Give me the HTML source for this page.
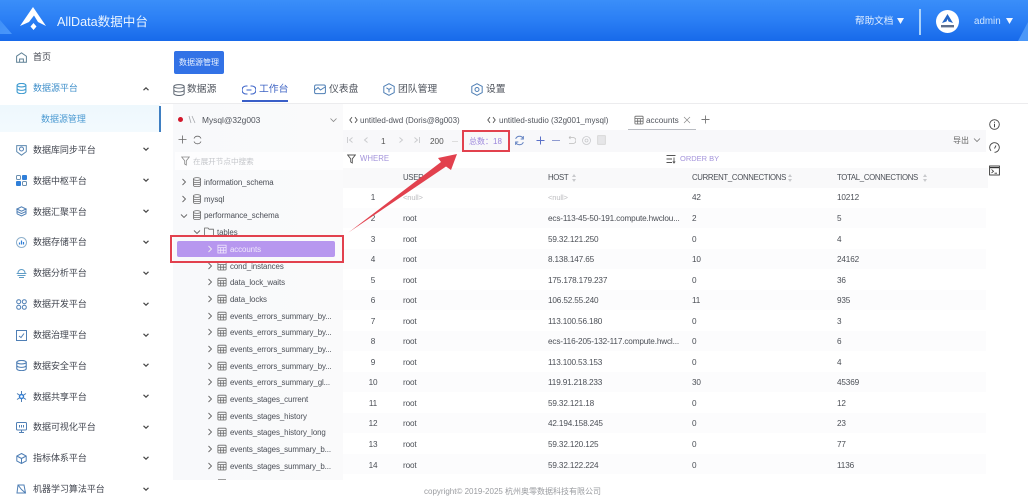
<!DOCTYPE html>
<html lang="zh"><head><meta charset="utf-8"><title>AllData</title>
<style>
html,body{margin:0;padding:0;background:#fff}
#p{position:relative;width:1028px;height:500px;overflow:hidden;background:#fff;font-family:"Liberation Sans","Noto Sans CJK SC",sans-serif;color:#555;filter:blur(.3px)}
#p div,#p svg{position:absolute}
.t{white-space:nowrap;line-height:12px;height:12px}
.s{font-size:9px;left:33px;color:#41454f;letter-spacing:-.03px}
.tr{font-size:7.9px;color:#4b4f57;letter-spacing:-.08px}
.c{font-size:8.2px;color:#4b4f56;letter-spacing:-.15px}
.h{font-size:7.8px;color:#4b4f56;letter-spacing:-.32px}
.ic{fill:none;stroke:#4f7fb5;stroke-width:1}
</style></head><body>
<div id="p">
<svg width="0" height="0">
<defs>
<symbol id="v" viewBox="0 0 8 8"><path d="M1.5 2.8L4 5.2L6.5 2.8" fill="none" stroke="#444" stroke-width="1.2"/></symbol>
<symbol id="r" viewBox="0 0 8 8"><path d="M2.5 1L5.5 4L2.5 7" fill="none" stroke="#666" stroke-width=".9"/></symbol>
<symbol id="d" viewBox="0 0 10 10"><g fill="none" stroke="#707070" stroke-width=".8"><ellipse cx="5" cy="2" rx="3.6" ry="1.4"/><path d="M1.4 2V8.2C1.4 9 3 9.600 5 9.600S8.600 9 8.600 8.200V2M1.4 4.200C1.4 5 3 5.600 5 5.600S8.600 5 8.600 4.200M1.4 6.200C1.4 7 3 7.600 5 7.600S8.600 7 8.600 6.200"/></g></symbol>
<symbol id="g" viewBox="0 0 10 10"><g fill="none" stroke="#666" stroke-width=".8"><rect x=".9" y="1.2" width="8.2" height="7.8" rx=".8"/><path d="M.9 3.6H9.1M.9 6.2H9.1M3.7 3.6V9M6.3 3.6V9"/></g></symbol>
<symbol id="cd" viewBox="0 0 9 8"><path d="M3 1.200L.8 4L3 6.800M6 1.200L8.200 4L6 6.800" fill="none" stroke="#555" stroke-width=".9"/></symbol>
</defs></svg>

<!-- header -->
<div style="left:0;top:0;width:1028px;height:41px;background:linear-gradient(180deg,#3a8ef9 0%,#2a7ef4 50%,#1769ea 100%)"></div>
<div style="left:0;top:20px;width:12px;height:14px;background:linear-gradient(135deg,#3f90f8,#4a97fa);clip-path:polygon(0 0,100% 100%,0 100%)"></div>
<svg style="left:19px;top:6px" width="28" height="26" viewBox="0 0 28 26"><path d="M14 1L27 20L19 16L15 9.500L10 16L1 20Z" fill="#fff"/><path d="M14.500 17L17.500 20.500L14.500 24L11.500 20.500Z" fill="#fff"/></svg>
<div class="t" style="left:57px;top:15px;font-size:12.6px;color:#eaf4ff;height:15px;line-height:15px">AllData数据中台</div>
<div class="t" style="left:855px;top:16px;font-size:9.6px;color:#e4f0ff">帮助文档</div>
<svg style="left:897px;top:18px" width="7" height="6" viewBox="0 0 7 6"><path d="M0 0H7L3.500 6Z" fill="#f2f7ff"/></svg>
<div style="left:919px;top:9px;width:2px;height:26px;background:#a9d2fb"></div>
<div style="left:936px;top:10px;width:23px;height:23px;border-radius:50%;background:#fff"></div>
<svg style="left:941px;top:14px" width="13" height="15" viewBox="0 0 13 15"><path d="M6.500 0L12 9L7.500 7.500L6.500 5L5.500 7.500L1 9Z" fill="#2466c8"/><rect x="0" y="11" width="13" height="2.400" fill="#2a3f66" opacity=".75"/></svg>
<div class="t" style="left:974px;top:16px;font-size:9.800px;color:#cfe5ff">admin</div>
<svg style="left:1006px;top:18px" width="7" height="6" viewBox="0 0 7 6"><path d="M0 0H7L3.500 6Z" fill="#f2f7ff"/></svg>
<div style="left:1018px;top:22px;width:10px;height:19px;background:#4a97f8;clip-path:polygon(100% 0,100% 100%,0 100%)"></div>

<!-- sidebar -->
<div style="left:0;top:105px;width:160px;height:27px;background:linear-gradient(180deg,#eef8fd,#f3fafe)"></div>
<div style="left:159px;top:106px;width:1.6px;height:26px;background:#3f7fc2"></div>

<svg style="left:16px;top:52px" class="ic" width="11" height="11" viewBox="0 0 11 11"><path d="M.6 4.200L5.500 .8L10.400 4.200V10.200H.6ZM3.600 10.200V7H7.400V10.200" stroke="#5f8196"/></svg>
<div class="t s" style="top:51px">首页</div>
<svg style="left:16px;top:83px" class="ic" width="11" height="11" viewBox="0 0 10 10"><ellipse cx="5" cy="2" rx="4" ry="1.600" stroke="#3f9bd0"/><path d="M1 2V8C1 9 3 9.700 5 9.700S9 9 9 8V2M1 5C1 6 3 6.700 5 6.700S9 6 9 5" stroke="#3f9bd0"/></svg>
<div class="t s" style="top:82px;color:#3f8fca">数据源平台</div>
<svg style="left:142px;top:85px;transform:rotate(180deg)" width="8" height="8"><use href="#v"/></svg>
<div class="t s" style="top:113px;left:41px;color:#4b9ad2">数据源管理</div>

<svg style="left:16px;top:144px" class="ic" width="11" height="12" viewBox="0 0 11 12"><path d="M.7 1.600H10.300V7.600L5.500 11.200L.7 7.600Z" stroke="#5f8ab0"/><circle cx="5.500" cy="5" r="2"/></svg>
<div class="t s" style="top:144px">数据库同步平台</div>
<svg style="left:142px;top:145px" width="8" height="8"><use href="#v"/></svg>

<svg style="left:16px;top:175px" width="11" height="11" viewBox="0 0 11 11"><rect x=".5" y=".5" width="4" height="4" rx="1" fill="none" stroke="#6a8fb0"/><rect x="6" y="0" width="5" height="5" rx="1" fill="#2f7fd9"/><rect x="0" y="6" width="5" height="5" rx="1" fill="#2f7fd9"/><rect x="6.500" y="6.500" width="4" height="4" rx="1" fill="none" stroke="#6a8fb0"/></svg>
<div class="t s" style="top:175px">数据中枢平台</div>
<svg style="left:142px;top:176px" width="8" height="8"><use href="#v"/></svg>

<svg style="left:16px;top:206px" class="ic" width="11" height="11" viewBox="0 0 11 11"><path d="M5.500 .8L10 3L5.500 5.200L1 3ZM1 5.400L5.500 7.600L10 5.400M1 7.800L5.500 10L10 7.800V3M1 7.800V3"/></svg>
<div class="t s" style="top:206px">数据汇聚平台</div>
<svg style="left:142px;top:207px" width="8" height="8"><use href="#v"/></svg>

<svg style="left:16px;top:237px" class="ic" width="11" height="11" viewBox="0 0 11 11"><circle cx="5.500" cy="5.500" r="5" stroke="#8fb0cc"/><path d="M3.500 7.500V5.500M5.500 7.500V3.500M7.500 7.500V5" stroke="#2f7fd9" stroke-width="1.200"/></svg>
<div class="t s" style="top:236px">数据存储平台</div>
<svg style="left:142px;top:238px" width="8" height="8"><use href="#v"/></svg>

<svg style="left:16px;top:268px" class="ic" width="11" height="11" viewBox="0 0 11 11"><path d="M2 5A3.500 3.500 0 0 1 9 5M.6 5.500H10.400M1.500 7.500H9.500M3 9.500H8" stroke="#5f9cc6"/></svg>
<div class="t s" style="top:267px">数据分析平台</div>
<svg style="left:142px;top:269px" width="8" height="8"><use href="#v"/></svg>

<svg style="left:16px;top:299px" class="ic" width="11" height="11" viewBox="0 0 11 11"><circle cx="2.700" cy="2.700" r="2"/><circle cx="8.300" cy="2.700" r="2"/><circle cx="2.700" cy="8.300" r="2"/><circle cx="8.300" cy="8.300" r="2"/></svg>
<div class="t s" style="top:298px">数据开发平台</div>
<svg style="left:142px;top:300px" width="8" height="8"><use href="#v"/></svg>

<svg style="left:16px;top:330px" class="ic" width="11" height="11" viewBox="0 0 11 11"><rect x=".5" y=".5" width="10" height="10"/><path d="M3 6L5 7.500L8 3.500"/></svg>
<div class="t s" style="top:329px">数据治理平台</div>
<svg style="left:142px;top:331px" width="8" height="8"><use href="#v"/></svg>

<svg style="left:16px;top:360px" class="ic" width="11" height="11" viewBox="0 0 10 10"><ellipse cx="5" cy="2" rx="4.300" ry="1.600"/><path d="M.7 2V8C.7 9 3 9.700 5 9.700S9.300 9 9.300 8V2M.7 5C.7 6 3 6.700 5 6.700S9.300 6 9.300 5"/></svg>
<div class="t s" style="top:360px">数据安全平台</div>
<svg style="left:142px;top:361px" width="8" height="8"><use href="#v"/></svg>

<svg style="left:16px;top:391px" class="ic" width="11" height="11" viewBox="0 0 11 11"><circle cx="5.500" cy="5.500" r="2" stroke="#2f7fd9" stroke-width="1.400"/><path d="M5.500 0V3M5.500 8V11M1 2.500L3.800 4.300M7.200 6.700L10 8.500M1 8.500L3.800 6.700M7.200 4.300L10 2.500"/></svg>
<div class="t s" style="top:391px">数据共享平台</div>
<svg style="left:142px;top:392px" width="8" height="8"><use href="#v"/></svg>

<svg style="left:16px;top:422px" class="ic" width="11" height="11" viewBox="0 0 11 11"><rect x=".5" y=".5" width="10" height="7.500" rx="1"/><path d="M5.500 8V10.500M3 10.500H8M3.500 5.500V3M5.500 5.500V3M7.500 5.500V3"/></svg>
<div class="t s" style="top:421px">数据可视化平台</div>
<svg style="left:142px;top:423px" width="8" height="8"><use href="#v"/></svg>

<svg style="left:16px;top:453px" class="ic" width="11" height="11" viewBox="0 0 11 11"><path d="M5.500 .5L10.200 3V8L5.500 10.500L.8 8V3ZM.8 3L5.500 5.500L10.200 3M5.500 5.500V10.500"/></svg>
<div class="t s" style="top:452px">指标体系平台</div>
<svg style="left:142px;top:454px" width="8" height="8"><use href="#v"/></svg>

<svg style="left:16px;top:484px" class="ic" width="11" height="11" viewBox="0 0 11 11"><path d="M2 1H8L9.500 9H1ZM2 1L5.500 5.500L9.500 9"/></svg>
<div class="t s" style="top:483px">机器学习算法平台</div>
<svg style="left:142px;top:485px" width="8" height="8"><use href="#v"/></svg>

<!-- top button + tabs -->
<div class="t" style="left:174px;top:51px;width:50px;height:23px;line-height:24px;background:#3272e6;border-radius:2px;color:#eaf2ff;font-size:8px;text-align:center">数据源管理</div>

<svg style="left:173px;top:84px" width="12" height="12" viewBox="0 0 10 10"><g fill="none" stroke="#5b6470" stroke-width=".8"><ellipse cx="5" cy="2" rx="4.300" ry="1.500"/><path d="M.7 2V8C.7 9 3 9.600 5 9.600S9.300 9 9.300 8V2M.7 5C.7 6 3 6.600 5 6.600S9.300 6 9.300 5"/></g></svg>
<div class="t" style="left:187px;top:84px;font-size:9.800px;color:#4d525b">数据源</div>
<svg style="left:242px;top:84px" width="14" height="12" viewBox="0 0 14 12"><path d="M5.500 2H4A4 4 0 0 0 4 10H5.500M8.500 2H10A4 4 0 0 1 10 10H8.500M4.500 6H9.500" fill="none" stroke="#3a62c8" stroke-width="1.100"/></svg>
<div class="t" style="left:259px;top:84px;font-size:9.800px;color:#3d63c4">工作台</div>
<div style="left:242px;top:100px;width:46px;height:2px;background:#3a5fc8"></div>
<svg style="left:314px;top:84px" width="12" height="11" viewBox="0 0 12 11"><rect x=".6" y="1" width="10.800" height="8.600" rx="1.400" fill="none" stroke="#4f7fb5"/><path d="M1 6L4 3.600L6.500 6L11 3" fill="none" stroke="#4f7fb5"/></svg>
<div class="t" style="left:329px;top:84px;font-size:9.800px;color:#4d525b">仪表盘</div>
<svg style="left:383px;top:83px" width="12" height="13" viewBox="0 0 12 13"><path d="M6 .7L11.200 3.400V9.600L6 12.300L.8 9.600V3.400Z" fill="none" stroke="#4f7fb5"/><path d="M3.400 4.800L6 6.400L8.600 4.800M6 6.400V9.400" fill="none" stroke="#4f7fb5"/></svg>
<div class="t" style="left:398px;top:84px;font-size:9.800px;color:#4d525b">团队管理</div>
<svg style="left:471px;top:83px" width="12" height="13" viewBox="0 0 12 13"><path d="M6 .7L11.200 3.400V9.600L6 12.300L.8 9.600V3.400Z" fill="none" stroke="#4f7fb5"/><circle cx="6" cy="6.500" r="2" fill="none" stroke="#4f7fb5"/></svg>
<div class="t" style="left:486px;top:84px;font-size:9.800px;color:#4d525b">设置</div>
<div style="left:160px;top:103px;width:868px;height:1px;background:#ececee"></div>

<!-- tree panel -->
<div style="left:173px;top:104px;width:170px;height:376px;background:linear-gradient(90deg,#f8f9fb,#fafafb)"></div>
<div style="left:175px;top:152px;width:168px;height:18px;background:#fdfdfe"></div>
<div style="left:178px;top:117px;width:5px;height:5px;border-radius:50%;background:#d3172b"></div>
<svg style="left:188px;top:115px" width="8" height="9" viewBox="0 0 8 9"><path d="M1 1L3 8M4 1L7 8" fill="none" stroke="#a5a8ad" stroke-width=".8"/></svg>
<div class="t" style="left:202px;top:114px;font-size:8.400px;color:#50545c">Mysql@32g003</div>
<svg style="left:329px;top:116px" width="9" height="8" viewBox="0 0 8 8"><path d="M1 2.500L4 5.500L7 2.500" fill="none" stroke="#888" stroke-width=".8"/></svg>
<svg style="left:178px;top:135px" width="9" height="9" viewBox="0 0 9 9"><path d="M4.500 .5V8.500M.5 4.500H8.500" stroke="#666" stroke-width=".8"/></svg>
<svg style="left:193px;top:135px" width="9" height="10" viewBox="0 0 9 10"><path d="M1 3.500A3.800 3.800 0 0 1 8 3.500M8 6.500A3.800 3.800 0 0 1 1 6.500" fill="none" stroke="#666" stroke-width=".8"/></svg>
<svg style="left:181px;top:156px" width="9" height="10" viewBox="0 0 9 10"><path d="M.7 1H8.300L5.300 4.800V9L3.700 8V4.800Z" fill="none" stroke="#888" stroke-width=".8"/></svg>
<div class="t" style="left:193px;top:156px;font-size:7.600px;color:#c3c5c9">在展开节点中搜索</div>

<svg style="left:180px;top:178px" width="8" height="8"><use href="#r"/></svg><svg style="left:192px;top:177px" width="10" height="10"><use href="#d"/></svg><div class="t tr" style="left:204px;top:177px">information_schema</div>
<svg style="left:180px;top:195px" width="8" height="8"><use href="#r"/></svg><svg style="left:192px;top:194px" width="10" height="10"><use href="#d"/></svg><div class="t tr" style="left:204px;top:194px">mysql</div>
<svg style="left:180px;top:212px;transform:rotate(90deg)" width="8" height="8"><use href="#r"/></svg><svg style="left:192px;top:210px" width="10" height="10"><use href="#d"/></svg><div class="t tr" style="left:204px;top:210px">performance_schema</div>
<svg style="left:193px;top:228px;transform:rotate(90deg)" width="8" height="8"><use href="#r"/></svg><svg style="left:204px;top:227px" width="10" height="9" viewBox="0 0 10 9"><path d="M.6 1H4L5 2.200H9.400V8.400H.6Z" fill="none" stroke="#666" stroke-width=".8"/></svg><div class="t tr" style="left:217px;top:227px">tables</div>

<div style="left:177px;top:241px;width:158px;height:16px;background:#b797ef;border-radius:2px"></div>
<svg style="left:206px;top:245px" width="8" height="8" viewBox="0 0 8 8"><path d="M2.500 1L5.500 4L2.500 7" fill="none" stroke="#eee" stroke-width=".9"/></svg>
<svg style="left:217px;top:244px" width="10" height="10" viewBox="0 0 10 10"><g fill="none" stroke="#f1e9fd" stroke-width=".8"><rect x=".9" y="1.200" width="8.200" height="7.800"/><path d="M.9 3.600H9.100M.9 6.200H9.100M3.700 3.600V9M6.300 3.600V9"/></g></svg>
<div class="t tr" style="left:230px;top:244px;color:#f0e9fc">accounts</div>

<svg style="left:206px;top:262px" width="8" height="8"><use href="#r"/></svg><svg style="left:217px;top:261px" width="10" height="10"><use href="#g"/></svg><div class="t tr" style="left:230px;top:261px">cond_instances</div>
<svg style="left:206px;top:278px" width="8" height="8"><use href="#r"/></svg><svg style="left:217px;top:277px" width="10" height="10"><use href="#g"/></svg><div class="t tr" style="left:230px;top:277px">data_lock_waits</div>
<svg style="left:206px;top:295px" width="8" height="8"><use href="#r"/></svg><svg style="left:217px;top:294px" width="10" height="10"><use href="#g"/></svg><div class="t tr" style="left:230px;top:294px">data_locks</div>
<svg style="left:206px;top:312px" width="8" height="8"><use href="#r"/></svg><svg style="left:217px;top:311px" width="10" height="10"><use href="#g"/></svg><div class="t tr" style="left:230px;top:311px">events_errors_summary_by...</div>
<svg style="left:206px;top:328px" width="8" height="8"><use href="#r"/></svg><svg style="left:217px;top:327px" width="10" height="10"><use href="#g"/></svg><div class="t tr" style="left:230px;top:327px">events_errors_summary_by...</div>
<svg style="left:206px;top:345px" width="8" height="8"><use href="#r"/></svg><svg style="left:217px;top:344px" width="10" height="10"><use href="#g"/></svg><div class="t tr" style="left:230px;top:344px">events_errors_summary_by...</div>
<svg style="left:206px;top:362px" width="8" height="8"><use href="#r"/></svg><svg style="left:217px;top:361px" width="10" height="10"><use href="#g"/></svg><div class="t tr" style="left:230px;top:361px">events_errors_summary_by...</div>
<svg style="left:206px;top:378px" width="8" height="8"><use href="#r"/></svg><svg style="left:217px;top:377px" width="10" height="10"><use href="#g"/></svg><div class="t tr" style="left:230px;top:377px">events_errors_summary_gl...</div>
<svg style="left:206px;top:395px" width="8" height="8"><use href="#r"/></svg><svg style="left:217px;top:394px" width="10" height="10"><use href="#g"/></svg><div class="t tr" style="left:230px;top:394px">events_stages_current</div>
<svg style="left:206px;top:412px" width="8" height="8"><use href="#r"/></svg><svg style="left:217px;top:411px" width="10" height="10"><use href="#g"/></svg><div class="t tr" style="left:230px;top:411px">events_stages_history</div>
<svg style="left:206px;top:428px" width="8" height="8"><use href="#r"/></svg><svg style="left:217px;top:427px" width="10" height="10"><use href="#g"/></svg><div class="t tr" style="left:230px;top:427px">events_stages_history_long</div>
<svg style="left:206px;top:445px" width="8" height="8"><use href="#r"/></svg><svg style="left:217px;top:444px" width="10" height="10"><use href="#g"/></svg><div class="t tr" style="left:230px;top:444px">events_stages_summary_b...</div>
<svg style="left:206px;top:462px" width="8" height="8"><use href="#r"/></svg><svg style="left:217px;top:461px" width="10" height="10"><use href="#g"/></svg><div class="t tr" style="left:230px;top:461px">events_stages_summary_b...</div>
<svg style="left:217px;top:478px" width="10" height="2" viewBox="0 0 10 2"><path d="M1 1.500H9" stroke="#888" stroke-width=".8"/></svg>

<!-- editor tabs -->
<svg style="left:349px;top:116px" width="9" height="8"><use href="#cd"/></svg>
<div class="t" style="left:360px;top:115px;font-size:8px;color:#50545c">untitled-dwd (Doris@8g003)</div>
<svg style="left:487px;top:116px" width="9" height="8"><use href="#cd"/></svg>
<div class="t" style="left:499px;top:115px;font-size:8px;color:#50545c">untitled-studio (32g001_mysql)</div>
<svg style="left:634px;top:115px" width="10" height="10"><use href="#g"/></svg>
<div class="t" style="left:646px;top:115px;font-size:8.200px;color:#50545c">accounts</div>
<svg style="left:683px;top:116px" width="8" height="8" viewBox="0 0 8 8"><path d="M1 1L7 7M7 1L1 7" stroke="#888" stroke-width=".7"/></svg>
<div style="left:628px;top:129px;width:68px;height:1px;background:#b9bcc2"></div>
<svg style="left:701px;top:115px" width="9" height="9" viewBox="0 0 9 9"><path d="M4.500 .5V8.500M.5 4.500H8.500" stroke="#777" stroke-width=".9"/></svg>

<!-- toolbar -->
<div style="left:343px;top:130px;width:643px;height:22px;background:#f8f8fa"></div>
<svg style="left:346px;top:136px" width="8" height="8" viewBox="0 0 8 8"><path d="M1.500 1V7M6.500 1.500L3.500 4L6.500 6.500" fill="none" stroke="#c8c9cc" stroke-width=".9"/></svg>
<svg style="left:362px;top:136px" width="8" height="8" viewBox="0 0 8 8"><path d="M5.500 1.500L2.500 4L5.500 6.500" fill="none" stroke="#c8c9cc" stroke-width=".9"/></svg>
<div class="t" style="left:381px;top:136px;font-size:8.200px;color:#555">1</div>
<svg style="left:397px;top:136px" width="8" height="8" viewBox="0 0 8 8"><path d="M2.500 1.500L5.500 4L2.500 6.500" fill="none" stroke="#c8c9cc" stroke-width=".9"/></svg>
<svg style="left:413px;top:136px" width="8" height="8" viewBox="0 0 8 8"><path d="M6.500 1V7M1.500 1.500L4.500 4L1.500 6.500" fill="none" stroke="#c8c9cc" stroke-width=".9"/></svg>
<div class="t" style="left:430px;top:136px;font-size:8.200px;color:#555">200</div>
<div style="left:452px;top:141px;width:6px;height:1px;background:#ddd"></div>
<div class="t" style="left:469px;top:136px;font-size:8px;color:#9b86dc">总数：18</div>
<svg style="left:514px;top:135px" width="11" height="11" viewBox="0 0 9 10"><path d="M1 3.500A3.800 3.800 0 0 1 8 3.500M8 6.500A3.800 3.800 0 0 1 1 6.500M8 1V3.600H5.600M1 9V6.400H3.400" fill="none" stroke="#5f7fc0" stroke-width=".9"/></svg>
<svg style="left:536px;top:136px" width="9" height="9" viewBox="0 0 9 9"><path d="M4.500 .5V8.500M.5 4.500H8.500" stroke="#5a70c8" stroke-width="1"/></svg>
<div style="left:552px;top:140px;width:8px;height:1px;background:#8f9bd0"></div>
<svg style="left:567px;top:136px" width="9" height="9" viewBox="0 0 9 9"><path d="M2 1.500H6A2.700 2.700 0 0 1 6 7.500H2M2 1.500L3.500 .3M2 1.500L3.500 3" fill="none" stroke="#bbb" stroke-width=".8"/></svg>
<svg style="left:582px;top:136px" width="9" height="9" viewBox="0 0 9 9"><circle cx="4.500" cy="4.500" r="4" fill="none" stroke="#c8c9cc" stroke-width=".8"/><circle cx="4.500" cy="4.500" r="1.500" fill="none" stroke="#c8c9cc" stroke-width=".8"/></svg>
<svg style="left:597px;top:135px" width="9" height="10" viewBox="0 0 9 10"><rect x=".7" y=".7" width="7.600" height="8.600" fill="#e6e6e8" stroke="#ccc" stroke-width=".7"/></svg>
<div class="t" style="left:953px;top:135px;font-size:8px;color:#666">导出</div>
<svg style="left:973px;top:136px" width="8" height="8" viewBox="0 0 8 8"><path d="M1 2.500L4 5.500L7 2.500" fill="none" stroke="#777" stroke-width=".8"/></svg>

<svg style="left:347px;top:154px" width="9" height="10" viewBox="0 0 9 10"><path d="M.7 1H8.300L5.300 4.800V9L3.700 8V4.800Z" fill="none" stroke="#555" stroke-width=".9"/></svg>
<div class="t" style="left:360px;top:153px;font-size:7.800px;color:#a494db">WHERE</div>
<svg style="left:666px;top:154px" width="10" height="10" viewBox="0 0 10 10"><path d="M.5 1.500H9.500M.5 5H6M.5 8.500H6M8 3.500V9M6.800 7.500L8 9L9.200 7.500" fill="none" stroke="#555" stroke-width=".9"/></svg>
<div class="t" style="left:680px;top:153px;font-size:7.500px;color:#a494db">ORDER BY</div>

<!-- table header -->
<div style="left:343px;top:168px;width:645px;height:20px;background:#f9f9fa"></div>
<div class="t h" style="left:403px;top:172px">USER</div>
<div class="t h" style="left:548px;top:172px">HOST</div>
<div class="t h" style="left:692px;top:172px">CURRENT_CONNECTIONS</div>
<div class="t h" style="left:837px;top:172px">TOTAL_CONNECTIONS</div>
<svg style="left:571px;top:173px" width="6" height="10" viewBox="0 0 6 10"><path d="M3 1L5 4H1ZM3 9L1 6H5Z" fill="#c8c9cc"/></svg>
<svg style="left:787px;top:173px" width="6" height="10" viewBox="0 0 6 10"><path d="M3 1L5 4H1ZM3 9L1 6H5Z" fill="#c8c9cc"/></svg>
<svg style="left:922px;top:173px" width="6" height="10" viewBox="0 0 6 10"><path d="M3 1L5 4H1ZM3 9L1 6H5Z" fill="#c8c9cc"/></svg>

<!-- rows background -->
<div style="left:343px;top:208px;width:643px;height:20px;background:#fcfcfd"></div>
<div style="left:343px;top:249px;width:643px;height:20px;background:#fcfcfd"></div>
<div style="left:343px;top:290px;width:643px;height:20px;background:#fcfcfd"></div>
<div style="left:343px;top:331px;width:643px;height:20px;background:#fcfcfd"></div>
<div style="left:343px;top:372px;width:643px;height:20px;background:#fcfcfd"></div>
<div style="left:343px;top:413px;width:643px;height:20px;background:#fcfcfd"></div>
<div style="left:343px;top:454px;width:643px;height:20px;background:#fcfcfd"></div>

<!-- rows -->
<div class="t c" style="left:369px;top:192px;width:8px;text-align:center">1</div><div class="t c" style="left:403px;top:192px;color:#bdbdc0;font-size:7.600px">&lt;null&gt;</div><div class="t c" style="left:548px;top:192px;color:#bdbdc0;font-size:7.600px">&lt;null&gt;</div><div class="t c" style="left:692px;top:192px">42</div><div class="t c" style="left:837px;top:192px">10212</div>
<div class="t c" style="left:369px;top:213px;width:8px;text-align:center">2</div><div class="t c" style="left:403px;top:213px">root</div><div class="t c" style="left:548px;top:213px">ecs-113-45-50-191.compute.hwclou...</div><div class="t c" style="left:692px;top:213px">2</div><div class="t c" style="left:837px;top:213px">5</div>
<div class="t c" style="left:369px;top:234px;width:8px;text-align:center">3</div><div class="t c" style="left:403px;top:234px">root</div><div class="t c" style="left:548px;top:234px">59.32.121.250</div><div class="t c" style="left:692px;top:234px">0</div><div class="t c" style="left:837px;top:234px">4</div>
<div class="t c" style="left:369px;top:254px;width:8px;text-align:center">4</div><div class="t c" style="left:403px;top:254px">root</div><div class="t c" style="left:548px;top:254px">8.138.147.65</div><div class="t c" style="left:692px;top:254px">10</div><div class="t c" style="left:837px;top:254px">24162</div>
<div class="t c" style="left:369px;top:275px;width:8px;text-align:center">5</div><div class="t c" style="left:403px;top:275px">root</div><div class="t c" style="left:548px;top:275px">175.178.179.237</div><div class="t c" style="left:692px;top:275px">0</div><div class="t c" style="left:837px;top:275px">36</div>
<div class="t c" style="left:369px;top:295px;width:8px;text-align:center">6</div><div class="t c" style="left:403px;top:295px">root</div><div class="t c" style="left:548px;top:295px">106.52.55.240</div><div class="t c" style="left:692px;top:295px">11</div><div class="t c" style="left:837px;top:295px">935</div>
<div class="t c" style="left:369px;top:316px;width:8px;text-align:center">7</div><div class="t c" style="left:403px;top:316px">root</div><div class="t c" style="left:548px;top:316px">113.100.56.180</div><div class="t c" style="left:692px;top:316px">0</div><div class="t c" style="left:837px;top:316px">3</div>
<div class="t c" style="left:369px;top:336px;width:8px;text-align:center">8</div><div class="t c" style="left:403px;top:336px">root</div><div class="t c" style="left:548px;top:336px">ecs-116-205-132-117.compute.hwcl...</div><div class="t c" style="left:692px;top:336px">0</div><div class="t c" style="left:837px;top:336px">6</div>
<div class="t c" style="left:369px;top:357px;width:8px;text-align:center">9</div><div class="t c" style="left:403px;top:357px">root</div><div class="t c" style="left:548px;top:357px">113.100.53.153</div><div class="t c" style="left:692px;top:357px">0</div><div class="t c" style="left:837px;top:357px">4</div>
<div class="t c" style="left:367px;top:377px;width:12px;text-align:center">10</div><div class="t c" style="left:403px;top:377px">root</div><div class="t c" style="left:548px;top:377px">119.91.218.233</div><div class="t c" style="left:692px;top:377px">30</div><div class="t c" style="left:837px;top:377px">45369</div>
<div class="t c" style="left:367px;top:398px;width:12px;text-align:center">11</div><div class="t c" style="left:403px;top:398px">root</div><div class="t c" style="left:548px;top:398px">59.32.121.18</div><div class="t c" style="left:692px;top:398px">0</div><div class="t c" style="left:837px;top:398px">12</div>
<div class="t c" style="left:367px;top:418px;width:12px;text-align:center">12</div><div class="t c" style="left:403px;top:418px">root</div><div class="t c" style="left:548px;top:418px">42.194.158.245</div><div class="t c" style="left:692px;top:418px">0</div><div class="t c" style="left:837px;top:418px">23</div>
<div class="t c" style="left:367px;top:439px;width:12px;text-align:center">13</div><div class="t c" style="left:403px;top:439px">root</div><div class="t c" style="left:548px;top:439px">59.32.120.125</div><div class="t c" style="left:692px;top:439px">0</div><div class="t c" style="left:837px;top:439px">77</div>
<div class="t c" style="left:367px;top:460px;width:12px;text-align:center">14</div><div class="t c" style="left:403px;top:460px">root</div><div class="t c" style="left:548px;top:460px">59.32.122.224</div><div class="t c" style="left:692px;top:460px">0</div><div class="t c" style="left:837px;top:460px">1136</div>

<!-- right icons -->
<svg style="left:989px;top:119px" width="11" height="11" viewBox="0 0 11 11"><circle cx="5.500" cy="5.500" r="4.800" fill="none" stroke="#444" stroke-width=".9"/><path d="M5.500 4.800V8.200M5.500 2.800V3.800" stroke="#444" stroke-width="1"/></svg>
<svg style="left:989px;top:142px" width="11" height="11" viewBox="0 0 11 11"><path d="M2 8.800A4.800 4.800 0 1 1 5.500 10.300M7 3.500L5.500 6.500" fill="none" stroke="#444" stroke-width=".9"/></svg>
<svg style="left:989px;top:165px" width="11" height="11" viewBox="0 0 11 11"><rect x=".6" y="1" width="9.800" height="9" fill="none" stroke="#333" stroke-width=".9"/><path d="M.6 2.600H10.400" stroke="#333" stroke-width="1.200"/><path d="M2.500 4.500L4.500 6.200L2.500 8M5.500 8.200H8" fill="none" stroke="#333" stroke-width=".8"/></svg>

<!-- footer -->
<div class="t" style="left:424px;top:486px;font-size:8px;color:#9a9ca0">copyright© 2019-2025 杭州奥零数据科技有限公司</div>

<!-- red annotations -->
<div style="left:170px;top:235px;width:174px;height:28px;border:2px solid #e2414e;box-sizing:border-box"></div>
<div style="left:462px;top:130px;width:48px;height:22px;border:2px solid #e2414e;box-sizing:border-box"></div>
<svg style="left:340px;top:145px" width="125" height="95" viewBox="0 0 125 95"><path d="M8.500 87.500L101 17L98 13L117 9L111 25L106 21.500Z" fill="#e2414e"/></svg>
</div>
</body></html>
